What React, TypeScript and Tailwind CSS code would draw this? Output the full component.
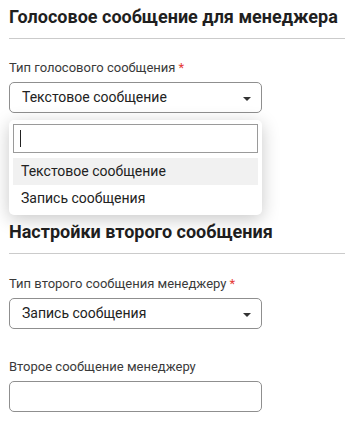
import React from 'react';

function Caret() {
    return (
        <svg width="8" height="4" viewBox="0 0 8 4" className="mt-[3px]">
            <path d="M0 0h8L4 4z" fill="#333" />
        </svg>
    );
}

function Field({ label, required, children, className = '' }: { label: string; required?: boolean; children: React.ReactNode; className?: string }) {
    return (
        <div className={className}>
            <div className="text-[13px] leading-[16px] text-[#3a3a3a] mb-[6px]">
                {label}
                {required && <span className="text-[#e53935] ml-[3px]">*</span>}
            </div>
            {children}
        </div>
    );
}

function Select({ value }: { value: string }) {
    return (
        <div className="w-[253px] h-[31px] border border-[#8f8f8f] rounded-[5px] flex items-center justify-between pl-[12px] pr-[10px]">
            <span className="text-[14px] text-[#222]">{value}</span>
            <Caret />
        </div>
    );
}

function Heading({ children, className = '' }: { children: React.ReactNode; className?: string }) {
    return (
        <div className={className}>
            <h2 className="text-[18px] leading-[24px] font-bold text-[#1f1f1f]">{children}</h2>
            <div className="mt-[9px] border-t border-[#cbcbcb]" />
        </div>
    );
}

function Dropdown() {
    const options = ['Текстовое сообщение', 'Запись сообщения'];
    return (
        <div className="absolute left-0 top-[calc(100%+7px)] w-[253px] bg-white rounded-[5px] shadow-[0_4px_18px_rgba(0,0,0,0.22)] px-[4px] pt-[4px] pb-[3px] z-10">
            <div className="h-[29px] border border-[#9a9a9a] flex items-center">
                <div className="w-px h-[17px] bg-[#222] ml-[6px]" />
            </div>
            <div className="mt-[5px]">
                {options.map((o, i) => (
                    <div
                        key={o}
                        className={`h-[27px] flex items-center pl-[8px] text-[14px] text-[#222] ${i === 0 ? 'bg-[#f1f1f1]' : ''}`}
                    >
                        {o}
                    </div>
                ))}
            </div>
        </div>
    );
}

export default function App() {
    return (
        <div className="min-h-screen bg-white font-['Roboto',sans-serif] pl-[9px] pt-[5px]">
            <Heading>Голосовое сообщение для менеджера</Heading>
            <div className="relative mt-[21px] w-[253px]">
                <Field label="Тип голосового сообщения" required>
                    <Select value="Текстовое сообщение" />
                </Field>
                <Dropdown />
            </div>

            <Heading className="mt-[107px]">Настройки второго сообщения</Heading>
            <Field label="Тип второго сообщения менеджеру" required className="mt-[22px]">
                <Select value="Запись сообщения" />
            </Field>
            <Field label="Второе сообщение менеджеру" className="mt-[30px]">
                <div className="w-[253px] h-[31px] border border-[#8f8f8f] rounded-[5px]" />
            </Field>
        </div>
    );
}
